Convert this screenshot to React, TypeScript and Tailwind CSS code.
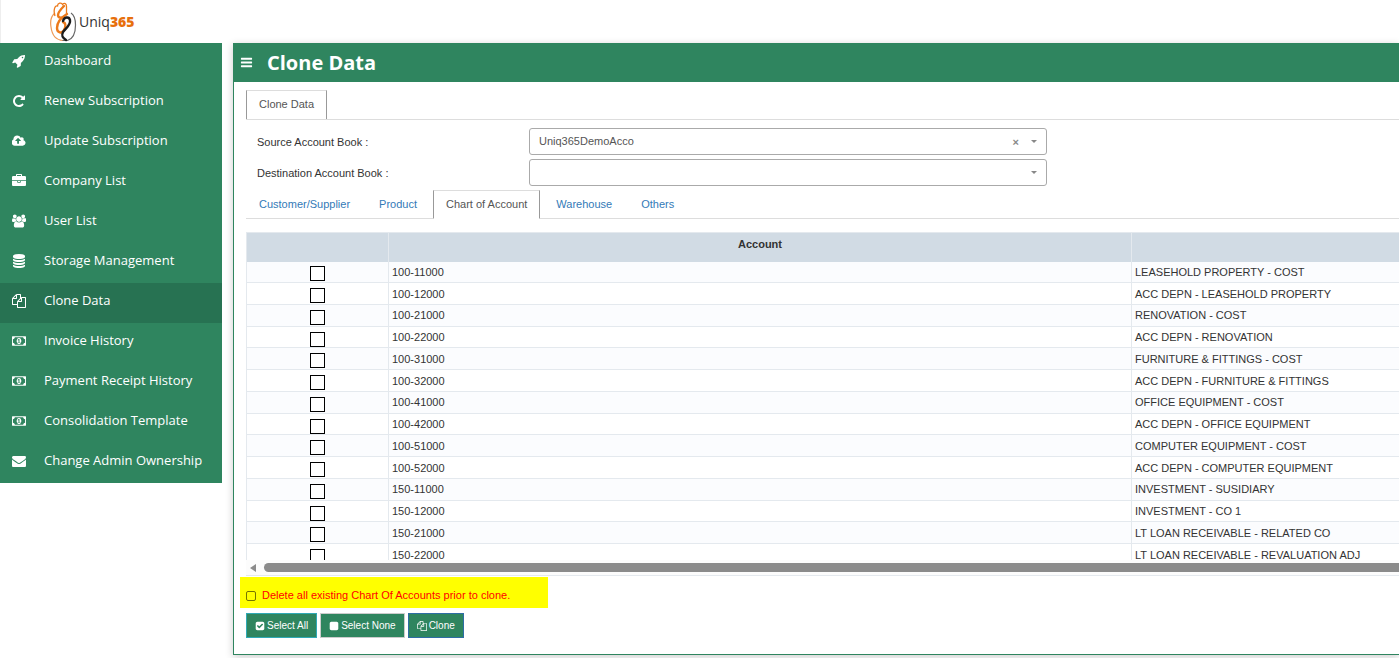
import * as React from "react";

type IconShape = { width: number; d: string };

const ICONS = {
  rocket: {
    width: 1792,
    d: "M1440 448q0-40-28-68t-68-28-68 28-28 68 28 68 68 28 68-28 28-68zm224-288q0 249-75.5 430.5t-253.5 360.5q-81 80-195 176l-20 379q-2 16-16 26l-384 224q-7 4-16 4-12 0-23-9l-64-64q-13-14-8-32l85-276-281-281-276 85q-3 1-9 1-14 0-23-9l-64-64q-17-19-5-39l224-384q10-14 26-16l379-20q96-114 176-195 188-187 358-258t431-71q14 0 24 9.5t10 22.5z",
  },
  repeat: {
    width: 1792,
    d: "M1664 256v448q0 26-19 45t-45 19h-448q-42 0-59-40-17-39 14-69l138-138q-148-137-349-137-104 0-198.5 40.5t-163.5 109.5-109.5 163.5-40.5 198.5 40.5 198.5 109.5 163.5 163.5 109.5 198.5 40.5q119 0 225-52t179-147q7-10 23-12 15 0 25 9l137 138q9 8 9.5 20.5t-7.5 22.5q-109 132-264 204.5t-327 72.5q-156 0-298-61t-245-164-164-245-61-298 61-298 164-245 245-164 298-61q147 0 284.5 55.5t244.5 156.5l130-129q29-31 70-14 39 17 39 59z",
  },
  upload: {
    width: 1920,
    d: "M1216 864q0-14-9-23l-352-352q-9-9-23-9t-23 9l-351 351q-10 12-10 24 0 14 9 23t23 9h224v352q0 13 9.5 22.5t22.5 9.5h192q13 0 22.5-9.5t9.5-22.5v-352h224q13 0 22.5-9.5t9.5-22.5zm640 288q0 159-112.5 271.5t-271.5 112.5h-1088q-185 0-316.5-131.5t-131.5-316.5q0-130 70-240t188-165q-2-30-2-43 0-212 150-362t362-150q156 0 285.5 87t188.5 231q71-62 166-62 106 0 181 75t75 181q0 76-41 138 130 31 213.5 135.5t83.5 238.5z",
  },
  briefcase: {
    width: 1792,
    d: "M640 256h512v-128h-512v128zm1152 640v480q0 66-47 113t-113 47h-1472q-66 0-113-47t-47-113v-480h672v160q0 26 19 45t45 19h320q26 0 45-19t19-45v-160h672zm-768 0v128h-256v-128h256zm768-480v384h-1792v-384q0-66 47-113t113-47h352v-160q0-40 28-68t68-28h576q40 0 68 28t28 68v160h352q66 0 113 47t47 113z",
  },
  users: {
    width: 1920,
    d: "M593 896q-162 5-265 128h-134q-82 0-138-40.5t-56-118.5q0-353 124-353 6 0 43.5 21t97.5 42.5 119 21.5q67 0 133-23-5 37-5 66 0 159 93 290zm1071 637q0 120-73 189.5t-194 69.5h-874q-121 0-194-69.5t-73-189.5q0-53 3.5-103.5t14-109 26.5-108.5 43-97.5 62-81 85.5-53.5 111.5-20q10 0 43 21.5t73 48 107 48 135 21.5 135-21.5 107-48 73-48 43-21.5q61 0 111.5 20t85.5 53.5 62 81 43 97.5 26.5 108.5 14 109 3.5 103.5zm-1024-1277q0 106-75 181t-181 75-181-75-75-181 75-181 181-75 181 75 75 181zm704 384q0 159-112.5 271.5t-271.5 112.5-271.5-112.5-112.5-271.5 112.5-271.5 271.5-112.5 271.5 112.5 112.5 271.5zm576 225q0 78-56 118.5t-138 40.5h-134q-103-123-265-128 93-131 93-290 0-29-5-66 66 23 133 23 59 0 119-21.5t97.5-42.5 43.5-21q124 0 124 353zm-128-609q0 106-75 181t-181 75-181-75-75-181 75-181 181-75 181 75 75 181z",
  },
  database: {
    width: 1792,
    d: "M896 768q237 0 443-43t325-127v170q0 69-103 128t-280 93.5-385 34.5-385-34.5-280-93.5-103-128v-170q119 84 325 127t443 43zm0 768q237 0 443-43t325-127v170q0 69-103 128t-280 93.5-385 34.5-385-34.5-280-93.5-103-128v-170q119 84 325 127t443 43zm0-384q237 0 443-43t325-127v170q0 69-103 128t-280 93.5-385 34.5-385-34.5-280-93.5-103-128v-170q119 84 325 127t443 43zm0-1152q208 0 385 34.5t280 93.5 103 128v128q0 69-103 128t-280 93.5-385 34.5-385-34.5-280-93.5-103-128v-128q0-69 103-128t280-93.5 385-34.5z",
  },
  files: {
    width: 1792,
    d: "M1696 384q40 0 68 28t28 68v1216q0 40-28 68t-68 28h-960q-40 0-68-28t-28-68v-288h-544q-40 0-68-28t-28-68v-672q0-40 20-88t48-76l408-408q28-28 76-48t88-20h416q40 0 68 28t28 68v328q68-40 128-40h416zm-544 213l-299 299h299v-299zm-640-384l-299 299h299v-299zm196 647l316-316v-416h-384v416q0 40-28 68t-68 28h-416v640h512v-256q0-40 20-88t48-76zm956 804v-1152h-384v416q0 40-28 68t-68 28h-416v640h896z",
  },
  money: {
    width: 1920,
    d: "M768 1152h384v-96h-128v-448h-114l-148 137 77 80q42-37 55-57h2v288h-128v96zm512-256q0 70-21 142t-59.5 134-101.5 101-138 39-138-39-101.5-101-59.5-134-21-142 21-142 59.5-134 101.5-101 138-39 138 39 101.5 101 59.5 134 21 142zm512 256v-512q-106 0-181-75t-75-181h-1152q0 106-75 181t-181 75v512q106 0 181 75t75 181h1152q0-106 75-181t181-75zm128-832v1152q0 26-19 45t-45 19h-1792q-26 0-45-19t-19-45v-1152q0-26 19-45t45-19h1792q26 0 45 19t19 45z",
  },
  envelope: {
    width: 1792,
    d: "M1792 710v794q0 66-47 113t-113 47h-1472q-66 0-113-47t-47-113v-794q44 49 101 87 362 246 497 345 57 42 92.5 65.5t94.5 48 110 24.5h2q51 0 110-24.5t94.5-48 92.5-65.5q170-123 498-345 57-39 100-87zm0-294q0 79-49 151t-122 123q-376 261-468 325-10 7-42.5 31t-54 38.5-52 32.5-57.5 27-50 9h-2q-23 0-50-9t-57.5-27-52-32.5-54-38.5-42.5-31q-91-64-262-182.5t-205-142.5q-62-42-117-115.5t-55-136.5q0-78 41.5-130t118.5-52h1472q65 0 112.5 47t47.5 113z",
  },
  checkSquare: {
    width: 1792,
    d: "M813 1299l614-614q19-19 19-45t-19-45l-102-102q-19-19-45-19t-45 19l-467 467-211-211q-19-19-45-19t-45 19l-102 102q-19 19-19 45t19 45l358 358q19 19 45 19t45-19zm851-883v960q0 119-84.5 203.5t-203.5 84.5h-960q-119 0-203.5-84.5t-84.5-203.5v-960q0-119 84.5-203.5t203.5-84.5h960q119 0 203.5 84.5t84.5 203.5z",
  },
  square: {
    width: 1792,
    d: "M1664 416v960q0 119-84.5 203.5t-203.5 84.5h-960q-119 0-203.5-84.5t-84.5-203.5v-960q0-119 84.5-203.5t203.5-84.5h960q119 0 203.5 84.5t84.5 203.5z",
  },
  bars: {
    width: 1792,
    d: "M1664 1344v128q0 26-19 45t-45 19h-1408q-26 0-45-19t-19-45v-128q0-26 19-45t45-19h1408q26 0 45 19t19 45zm0-512v128q0 26-19 45t-45 19h-1408q-26 0-45-19t-19-45v-128q0-26 19-45t45-19h1408q26 0 45 19t19 45zm0-512v128q0 26-19 45t-45 19h-1408q-26 0-45-19t-19-45v-128q0-26 19-45t45-19h1408q26 0 45 19t19 45z",
  },
} satisfies Record<string, IconShape>;

type IconName = keyof typeof ICONS;

function Icon({ name, className }: { name: IconName; className: string }) {
  const { width, d } = ICONS[name];
  return (
    <svg
      className={className}
      viewBox={`0 0 ${width} 1792`}
      fill="currentColor"
      aria-hidden="true"
    >
      <path d={d} />
    </svg>
  );
}

const MENU: { icon: IconName; label: string }[] = [
  { icon: "rocket", label: "Dashboard" },
  { icon: "repeat", label: "Renew Subscription" },
  { icon: "upload", label: "Update Subscription" },
  { icon: "briefcase", label: "Company List" },
  { icon: "users", label: "User List" },
  { icon: "database", label: "Storage Management" },
  { icon: "files", label: "Clone Data" },
  { icon: "money", label: "Invoice History" },
  { icon: "money", label: "Payment Receipt History" },
  { icon: "money", label: "Consolidation Template" },
  { icon: "envelope", label: "Change Admin Ownership" },
];

const TABS = [
  "Customer/Supplier",
  "Product",
  "Chart of Account",
  "Warehouse",
  "Others",
];

const ACCOUNTS = [
  { code: "100-11000", name: "LEASEHOLD PROPERTY - COST" },
  { code: "100-12000", name: "ACC DEPN - LEASEHOLD PROPERTY" },
  { code: "100-21000", name: "RENOVATION - COST" },
  { code: "100-22000", name: "ACC DEPN - RENOVATION" },
  { code: "100-31000", name: "FURNITURE & FITTINGS - COST" },
  { code: "100-32000", name: "ACC DEPN - FURNITURE & FITTINGS" },
  { code: "100-41000", name: "OFFICE EQUIPMENT - COST" },
  { code: "100-42000", name: "ACC DEPN - OFFICE EQUIPMENT" },
  { code: "100-51000", name: "COMPUTER EQUIPMENT - COST" },
  { code: "100-52000", name: "ACC DEPN - COMPUTER EQUIPMENT" },
  { code: "150-11000", name: "INVESTMENT - SUSIDIARY" },
  { code: "150-12000", name: "INVESTMENT - CO 1" },
  { code: "150-21000", name: "LT LOAN RECEIVABLE - RELATED CO" },
  { code: "150-22000", name: "LT LOAN RECEIVABLE - REVALUATION ADJ" },
];

function Logo() {
  return (
    <div className="flex items-center gap-[2px]">
      <svg className="h-10 w-7" viewBox="0 0 28 40" fill="none" aria-hidden="true">
        <path
          d="M6 11C2 14 1 19 2 25c1 8 5 13 12 13.500"
          stroke="#ee9a58"
          strokeWidth="1.200"
        />
        <path
          d="M6 14C4 8 6 3 8.500 4c0-3 4-4 5-1.500 2-2 4-1 4 2v7"
          stroke="#ec7a1c"
          strokeWidth="1.300"
        />
        <path
          d="M22 11c3 2 4.500 6 4.500 12 0 8-3 14-8 15.500h-5"
          stroke="#666666"
          strokeWidth="1.200"
        />
        <path
          d="M15 4c-3 3-6 6-6 9s3 3 6 2"
          stroke="#ec7a1c"
          strokeWidth="2.400"
          strokeLinecap="round"
        />
        <path
          d="M18 12c-5 3-10 8-10 14 0 5 5 6 7 2 2-3 2-7-1-8"
          stroke="#ec7a1c"
          strokeWidth="2.400"
          strokeLinecap="round"
        />
        <path
          d="M14 19c1-4 6-5 7-1 1 5-4 8-7 12-2 4 0 6 3 8"
          stroke="#1c1c1c"
          strokeWidth="2.400"
          strokeLinecap="round"
        />
      </svg>
      <span className="font-['Open_Sans',sans-serif] text-sm leading-none text-[#333333]">
        Uniq<b className="font-extrabold text-[#e76f0c]">365</b>
      </span>
    </div>
  );
}

function BookSelect({
  id,
  label,
  options,
  initial,
}: {
  id: string;
  label: string;
  options: string[];
  initial: string;
}) {
  const [value, setValue] = React.useState(initial);

  return (
    <div className="flex items-center">
      <label htmlFor={id} className="w-[272px] shrink-0 pt-[2px]">
        {label}
      </label>
      <div className="relative max-w-[518px] flex-1">
        <select
          id={id}
          value={value}
          onChange={(e) => setValue(e.target.value)}
          className="block h-[27px] w-full appearance-none rounded-[3px] border border-[#aaaaaa] bg-white pr-14 pl-[9px] text-[#555555] outline-none"
        >
          <option value="" />
          {options.map((o) => (
            <option key={o} value={o}>
              {o}
            </option>
          ))}
        </select>
        {value ? (
          <button
            type="button"
            aria-label="Clear"
            onClick={() => setValue("")}
            className="absolute inset-y-0 right-7 my-auto h-4 text-[11px] font-bold text-[#888888]"
          >
            ×
          </button>
        ) : null}
        <svg
          className="pointer-events-none absolute inset-y-0 right-[10px] my-auto h-[3px] w-[6px] text-[#888888]"
          viewBox="0 0 6 3"
          fill="currentColor"
          aria-hidden="true"
        >
          <path d="M0 0h6L3 3z" />
        </svg>
      </div>
    </div>
  );
}

function ActionButton({
  icon,
  label,
  border,
  onClick,
}: {
  icon: IconName;
  label: string;
  border: string;
  onClick?: () => void;
}) {
  return (
    <button
      type="button"
      onClick={onClick}
      className={[
        "flex h-[25px] items-center gap-[2px] border bg-[#2f855f] px-2 text-[10px] text-white",
        border,
      ].join(" ")}
    >
      <Icon name={icon} className="h-[10px] w-[10px]" />
      {label}
    </button>
  );
}

export default function App() {
  const [tab, setTab] = React.useState("Chart of Account");
  const [checked, setChecked] = React.useState<string[]>([]);

  function toggle(code: string) {
    setChecked((prev) =>
      prev.includes(code) ? prev.filter((c) => c !== code) : [...prev, code],
    );
  }

  return (
    <div className="min-h-screen overflow-hidden bg-white font-['Liberation_Sans',Arial,sans-serif] text-[11px] text-[#333333]">
      <header className="flex h-[43px] items-center border-l border-[#eeeeee] pl-12">
        <Logo />
      </header>

      <div className="flex items-start gap-[11px]">
        <nav className="w-[222px] shrink-0 bg-[#2f855f] font-['Open_Sans',sans-serif] text-[13px] text-white">
          {MENU.map((item) => (
            <a
              key={item.label}
              href="#"
              className={[
                "flex h-10 items-center gap-[18px] pb-[5px] pl-3",
                item.label === "Clone Data" ? "bg-[#277252]" : "",
              ].join(" ")}
            >
              <Icon name={item.icon} className="h-[14px] w-[14px]" />
              {item.label}
            </a>
          ))}
        </nav>

        <main className="min-w-0 flex-1 border-b border-l border-[#2f855f] bg-white shadow-[0_2px_8px_rgba(0,0,0,0.2)]">
          <div className="flex h-[39px] items-center gap-[14px] bg-[#2f855f] pl-[6px] text-white">
            <button type="button" aria-label="Toggle menu">
              <Icon name="bars" className="h-[13px] w-[13px]" />
            </button>
            <h1 className="font-['Open_Sans',sans-serif] text-xl font-bold">
              Clone Data
            </h1>
          </div>

          <div className="pt-2 pl-3">
            <div className="flex border-b border-[#dddddd]">
              <button
                type="button"
                className="h-[29px] border border-b-0 border-[#999999] border-t-[#dddddd] px-3 pb-[2px] text-[#555555]"
              >
                Clone Data
              </button>
            </div>

            <div className="space-y-1 pt-2 pb-1 pl-[11px]">
              <BookSelect
                id="source-book"
                label="Source Account Book :"
                options={["Uniq365DemoAcco"]}
                initial="Uniq365DemoAcco"
              />
              <BookSelect
                id="destination-book"
                label="Destination Account Book :"
                options={["Uniq365DemoAcco"]}
                initial=""
              />
            </div>

            <div className="flex gap-[3px] border-b border-[#dddddd]" role="tablist">
              {TABS.map((t) => (
                <button
                  key={t}
                  type="button"
                  role="tab"
                  aria-selected={t === tab}
                  onClick={() => setTab(t)}
                  className={[
                    "-mb-px h-[29px] border px-3",
                    t === tab
                      ? "border-x-[#999999] border-t-[#dddddd] border-b-white bg-white text-[#555555]"
                      : "border-transparent text-[#337ab7]",
                  ].join(" ")}
                >
                  {t}
                </button>
              ))}
            </div>

            <div className="mt-[13px] border-b border-[#e4e9ee]">
              <div className="h-[328px] overflow-hidden">
                <table className="h-[334px] w-[1630px] table-fixed border-collapse">
                  <thead>
                    <tr className="h-[29px] bg-[#d1dbe4]">
                      <th className="w-[142px] border border-[#e4e9ee] border-b-0 p-0" />
                      <th className="w-[743px] border border-[#e4e9ee] border-b-0 p-0 pb-[6px] font-bold">
                        Account
                      </th>
                      <th className="border border-[#e4e9ee] border-b-0 p-0" />
                    </tr>
                  </thead>
                  <tbody>
                    {ACCOUNTS.map((a) => (
                      <tr key={a.code} className="bg-white odd:bg-[#fbfcfe]">
                        <td className="border border-[#e4e9ee] border-t-0 p-0">
                          <input
                            type="checkbox"
                            aria-label={a.code}
                            checked={checked.includes(a.code)}
                            onChange={() => toggle(a.code)}
                            className="mx-auto mt-1 block h-[15px] w-[15px] appearance-none border border-black bg-white checked:bg-[#2f855f]"
                          />
                        </td>
                        <td className="border border-[#e4e9ee] border-t-0 px-[3px] py-0 leading-3">
                          {a.code}
                        </td>
                        <td className="border border-[#e4e9ee] border-t-0 px-[3px] py-0 leading-3">
                          {a.name}
                        </td>
                      </tr>
                    ))}
                  </tbody>
                </table>
              </div>
              <div className="flex h-[15px] items-center gap-2 bg-[#fcfcfc] pl-1">
                <svg
                  className="h-2 w-[6px] text-[#8b8b8b]"
                  viewBox="0 0 6 8"
                  fill="currentColor"
                  aria-hidden="true"
                >
                  <path d="M6 0v8L0 4z" />
                </svg>
                <div className="h-[9px] flex-1 rounded-l-full bg-[#8b8b8b]" />
              </div>
            </div>

            <label className="-ml-[6px] mt-px flex h-[31px] w-[308px] items-center gap-[6px] bg-[#ffff00] pt-[6px] pl-[6px] text-[#ff0000]">
              <input
                type="checkbox"
                className="h-[10px] w-[10px] appearance-none rounded-[2px] border border-[#767600] checked:bg-[#767600]"
              />
              Delete all existing Chart Of Accounts prior to clone.
            </label>

            <div className="flex gap-[3px] pt-[5px] pb-4">
              <ActionButton
                icon="checkSquare"
                label="Select All"
                border="border-[#2fa9b5]"
                onClick={() => setChecked(ACCOUNTS.map((a) => a.code))}
              />
              <ActionButton
                icon="square"
                label="Select None"
                border="border-[#cccccc]"
                onClick={() => setChecked([])}
              />
              <ActionButton icon="files" label="Clone" border="border-[#2e6da4]" />
            </div>
          </div>
        </main>
      </div>
    </div>
  );
}
